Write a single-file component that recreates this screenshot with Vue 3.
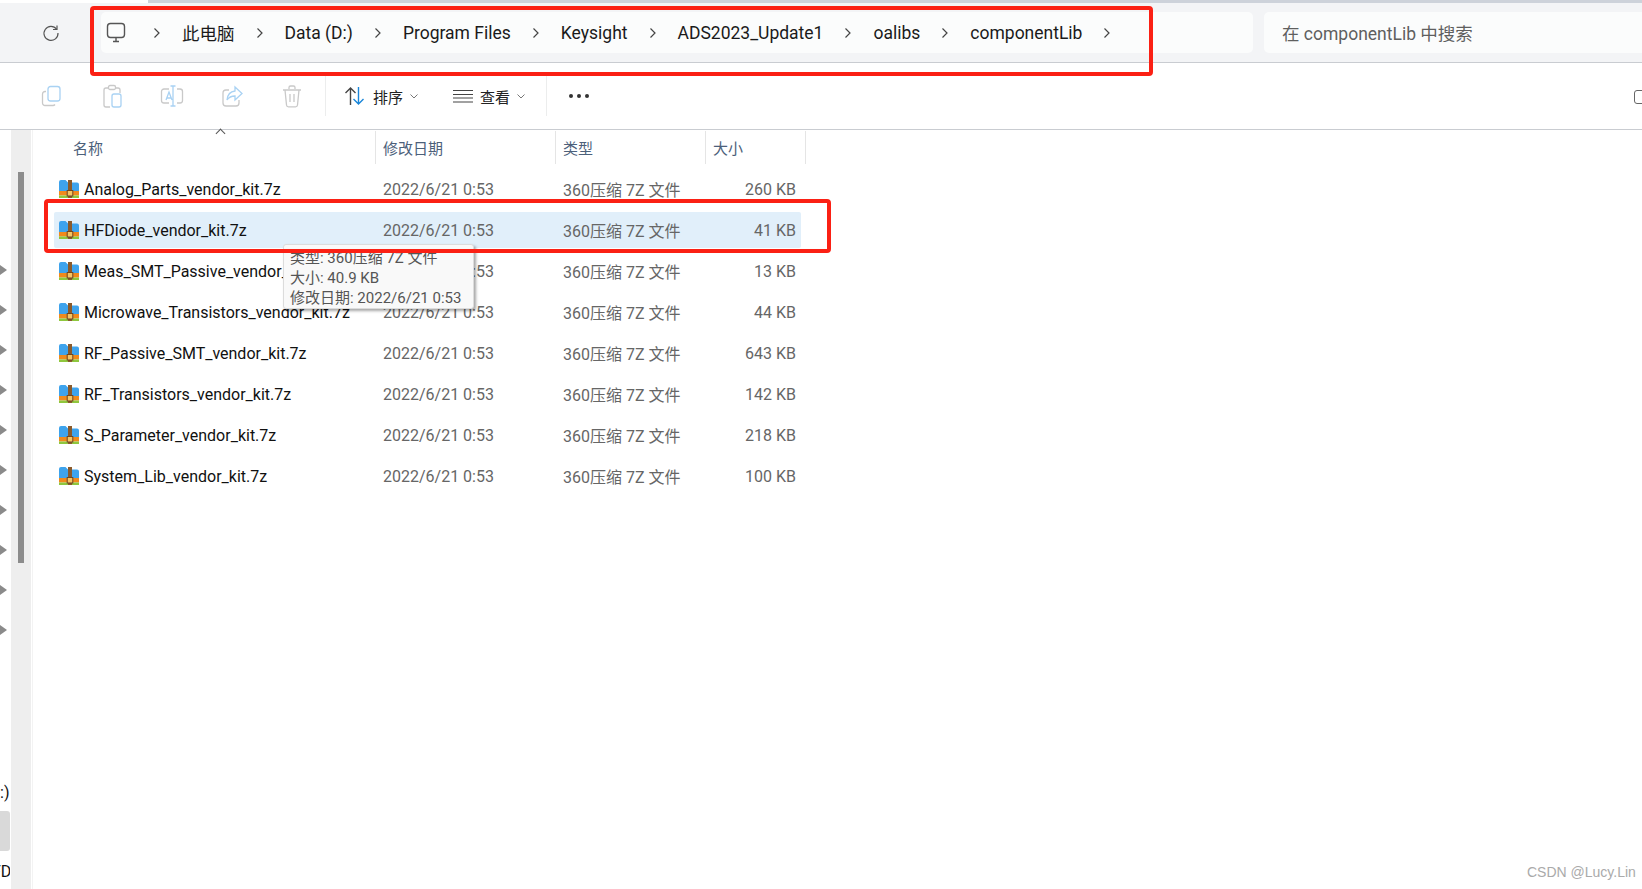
<template>
  <div class="page">
    <div class="top-strip"></div>

    <header class="address-row">
      <button class="refresh">
        <svg viewBox="0 0 20 20" width="20" height="20" fill="none" stroke="#555" stroke-width="1.2">
          <path d="M15.6 6.2A7 7 0 1 0 17 10" />
          <path d="M16 2.5v4h-4" />
        </svg>
      </button>
      <nav class="address-bar">
        <svg class="pc-icon" viewBox="0 0 22 22" width="22" height="22" fill="none" stroke="#555" stroke-width="1.4">
          <rect x="2.5" y="1.5" width="17" height="14" rx="3" />
          <path d="M8 19.5h6M11 16v3" />
        </svg>
        <template v-for="crumb in crumbs" :key="crumb">
          <svg class="chevron" viewBox="0 0 8 12" width="8" height="12" fill="none" stroke="#444" stroke-width="1.2"><path d="M1.5 1.5 6 6l-4.5 4.5" /></svg>
          <span class="crumb">{{ crumb }}</span>
        </template>
        <svg class="chevron" viewBox="0 0 8 12" width="8" height="12" fill="none" stroke="#444" stroke-width="1.2"><path d="M1.5 1.5 6 6l-4.5 4.5" /></svg>
      </nav>
      <div class="search">在 componentLib 中搜索</div>
    </header>

    <div class="toolbar">
      <div class="tool-group">
        <svg viewBox="0 0 24 24" width="24" height="24" fill="none" stroke-width="1.3">
          <path d="M6 7.5H5a2.5 2.5 0 0 0-2.5 2.5v9A2.5 2.5 0 0 0 5 21.500h8a2.500 2.500 0 0 0 2-1" stroke="#c9c9c9" />
          <rect x="8" y="2.500" width="12" height="14.500" rx="2.500" stroke="#a9d2f3" />
        </svg>
        <svg viewBox="0 0 24 24" width="24" height="24" fill="none" stroke-width="1.3">
          <path d="M9 4H6a2 2 0 0 0-2 2v15a2 2 0 0 0 2 2h4M15 4h3a2 2 0 0 1 2 2v3" stroke="#c9c9c9" />
          <rect x="8.500" y="1.500" width="7" height="4" rx="1.500" stroke="#c9c9c9" />
          <rect x="12" y="10" width="9" height="13" rx="2" stroke="#a9d2f3" />
        </svg>
        <svg viewBox="0 0 24 24" width="24" height="24" fill="none" stroke-width="1.3">
          <path d="M9 5H4a2.500 2.500 0 0 0-2.500 2.500v9A2.500 2.500 0 0 0 4 19h5M17 5h3a2.500 2.500 0 0 1 2.500 2.500v9A2.500 2.500 0 0 1 20 19h-3" stroke="#c9c9c9" />
          <path d="M13 2v20M10.500 2h5M10.500 22h5M6 16l3-8 3 8M7 14h4" stroke="#a9d2f3" />
        </svg>
        <svg viewBox="0 0 24 24" width="24" height="24" fill="none" stroke-width="1.3">
          <path d="M9 6H6a3 3 0 0 0-3 3v10a3 3 0 0 0 3 3h10a3 3 0 0 0 3-3v-3" stroke="#c9c9c9" />
          <path d="M15 3l7 6.500-7 6.500v-4c-4 0-6 1-8 4 .5-5 3-8.500 8-9z" stroke="#a9d2f3" />
        </svg>
        <svg viewBox="0 0 24 24" width="24" height="24" fill="none" stroke="#c9c9c9" stroke-width="1.3">
          <path d="M3 6h18M9 5V3.500A1.500 1.500 0 0 1 10.500 2h3A1.500 1.500 0 0 1 15 3.500V5M5 6l1.500 15a2 2 0 0 0 2 1.800h7a2 2 0 0 0 2-1.800L19 6M10 10v8M14 10v8" />
        </svg>
      </div>

      <div class="tool-sep"></div>

      <div class="tool-btn sort-btn">
        <svg viewBox="0 0 22 20" width="22" height="20" fill="none" stroke-width="1.4">
          <path d="M6.500 19V2M1.500 7l5-5 5 5" stroke="#444" />
          <path d="M14.500 1v17M9.500 13l5 5 5-5" stroke="#1a86d9" />
        </svg>
        <span>排序</span>
        <svg class="caret" viewBox="0 0 8 5" width="8" height="5" fill="none" stroke="#777"><path d="M.5.5 4 4 7.500.5" /></svg>
      </div>
      <div class="tool-btn view-btn">
        <svg viewBox="0 0 20 14" width="20" height="14" fill="none" stroke="#444" stroke-width="1.200">
          <path d="M0 1.500h20M0 5.500h20M0 9h20M0 13h20" />
        </svg>
        <span>查看</span>
        <svg class="caret" viewBox="0 0 8 5" width="8" height="5" fill="none" stroke="#777"><path d="M.5.5 4 4 7.500.5" /></svg>
      </div>

      <div class="tool-sep"></div>

      <div class="more"><i></i><i></i><i></i></div>
      <div class="details-btn"></div>
    </div>

    <main class="body">
      <aside class="nav">
        <div class="nav-labels">
          <span v-for="n in 10" :key="n" class="pin"></span>
        </div>
        <div class="nav-scroll"><div class="nav-thumb"></div></div>
        <span class="nav-drive">:)</span>
        <div class="nav-active"></div>
        <span class="nav-cut">FD</span>
      </aside>

      <section class="list">
        <div class="list-head">
          <div class="head-cell head-name">名称<span class="sort-mark"></span></div>
          <div class="head-cell">修改日期</div>
          <div class="head-cell">类型</div>
          <div class="head-cell">大小</div>
        </div>
        <div v-for="file in files" :key="file.name" class="file-row" :class="{ selected: file.selected }">
          <div class="file-name">
            <svg class="zip-icon" viewBox="0 0 20 18" width="20" height="18">
              <path d="M0 2a2 2 0 0 1 2-2h4.500l2.500 2.500h9a2 2 0 0 1 2 2V13H0z" fill="#3ea3ec" />
              <rect y="11" width="20" height="4.500" fill="#f08a1c" />
              <rect y="15.500" width="20" height="2.500" fill="#8fc73e" />
              <rect x="9" y="0" width="4" height="18" fill="#8a5a2b" />
              <rect x="8.200" y="10.500" width="5.600" height="5.500" fill="#f5c563" stroke="#6e4520" stroke-width="1" />
            </svg>
            {{ file.name }}
          </div>
          <div class="file-cell">2022/6/21 0:53</div>
          <div class="file-cell">360压缩 7Z 文件</div>
          <div class="file-cell file-size">{{ file.size }}</div>
        </div>
      </section>
    </main>

    <div class="tooltip">
      <div>类型: 360压缩 7Z 文件</div>
      <div>大小: 40.9 KB</div>
      <div>修改日期: 2022/6/21 0:53</div>
    </div>

    <div class="mark mark-address"></div>
    <div class="mark mark-row"></div>
    <div class="watermark">CSDN @Lucy.Lin</div>
  </div>
</template>

<script setup>
const crumbs = ['此电脑', 'Data (D:)', 'Program Files', 'Keysight', 'ADS2023_Update1', 'oalibs', 'componentLib']

const files = [
  { name: 'Analog_Parts_vendor_kit.7z', size: '260 KB' },
  { name: 'HFDiode_vendor_kit.7z', size: '41 KB', selected: true },
  { name: 'Meas_SMT_Passive_vendor_kit.7z', size: '13 KB' },
  { name: 'Microwave_Transistors_vendor_kit.7z', size: '44 KB' },
  { name: 'RF_Passive_SMT_vendor_kit.7z', size: '643 KB' },
  { name: 'RF_Transistors_vendor_kit.7z', size: '142 KB' },
  { name: 'S_Parameter_vendor_kit.7z', size: '218 KB' },
  { name: 'System_Lib_vendor_kit.7z', size: '100 KB' }
]
</script>

<style>
html,
body {
  margin: 0;
  background: #fff;
  overflow: hidden;
}
</style>

<style scoped>
.page {
  position: relative;
  width: 1642px;
  height: 889px;
  overflow: hidden;
  background: #fff;
  font-family: Roboto, "Noto Sans CJK SC", sans-serif;
  color: #1a1a1a;
}

.top-strip {
  height: 3px;
  margin-left: 148px;
  background: #cdd2da;
}

.address-row {
  display: flex;
  align-items: flex-start;
  height: 59px;
  padding-top: 9px;
  box-sizing: border-box;
  background: #f3f4f6;
  border-bottom: 1px solid #c9ccd1;
  height: 60px;
}

.refresh {
  width: 101px;
  height: 41px;
  padding: 0 0 0 0;
  border: 0;
  background: none;
  display: flex;
  align-items: center;
  justify-content: center;
  flex: none;
}

.address-bar {
  width: 1152px;
  height: 41px;
  flex: none;
  display: flex;
  align-items: center;
  box-sizing: border-box;
  background: #fbfcfc;
  border-radius: 5px;
  padding-left: 4px;
  font-size: 17.5px;
}

.pc-icon {
  margin-right: 26px;
}

.chevron {
  flex: none;
}

.crumb {
  margin: 0 21px;
  white-space: nowrap;
}

.search {
  flex: 1;
  margin-left: 11px;
  height: 41px;
  display: flex;
  align-items: center;
  padding-left: 18px;
  background: #fbfcfc;
  border-radius: 5px 0 0 5px;
  font-size: 17.5px;
  color: #5f5f5f;
}

.toolbar {
  display: flex;
  align-items: center;
  height: 67px;
  box-sizing: border-box;
  border-bottom: 1px solid #c9ccd1;
  position: relative;
}

.tool-group {
  display: flex;
  align-items: center;
  gap: 36px;
  padding-left: 40px;
  width: 325px;
  box-sizing: border-box;
}

.tool-sep {
  width: 1px;
  height: 40px;
  background: #eceded;
  flex: none;
}

.tool-btn {
  display: flex;
  align-items: center;
  font-size: 15px;
  color: #222;
}

.tool-btn span {
  margin-left: 7px;
}

.caret {
  margin-left: 7px;
}

.sort-btn {
  margin-left: 18px;
}

.view-btn {
  margin-left: 35px;
}

.view-btn + .tool-sep {
  margin-left: 21px;
}

.more {
  display: flex;
  gap: 4px;
  margin-left: 22px;
}

.more i {
  width: 4px;
  height: 4px;
  border-radius: 50%;
  background: #333;
}

.details-btn {
  position: absolute;
  left: 1634px;
  top: 27px;
  width: 16px;
  height: 14px;
  box-sizing: border-box;
  border: 1.5px solid #666;
  border-radius: 3px;
}

.body {
  display: flex;
  height: 759px;
}

.nav {
  position: relative;
  width: 33px;
  flex: none;
}

.nav-labels {
  display: flex;
  flex-direction: column;
  gap: 30px;
  padding-top: 135px;
}

.pin {
  width: 7px;
  height: 10px;
  background: #8a8a8a;
  clip-path: polygon(0 0, 100% 50%, 0 100%);
}

.nav-scroll {
  position: absolute;
  left: 11px;
  top: 0;
  width: 20px;
  height: 100%;
  background: #eeeeee;
}

.nav-thumb {
  width: 6px;
  height: 391px;
  margin: 42px 0 0 7px;
  background: #8c8c8c;
}

.nav-drive {
  position: absolute;
  left: 0;
  top: 653px;
  font-size: 16px;
  color: #111;
}

.nav-active {
  position: absolute;
  left: 0;
  top: 681px;
  width: 10px;
  height: 40px;
  background: #d9d9d9;
  border-radius: 0 3px 3px 0;
}

.nav-cut {
  position: absolute;
  left: -8px;
  top: 732px;
  width: 18px;
  overflow: hidden;
  font-size: 16px;
  color: #111;
}

.list {
  flex: 1;
  padding-left: 21px;
  border-left: 1px solid #f3f3f3;
  margin-left: -1px;
}

.list-head {
  display: grid;
  grid-template-columns: 322px 180px 150px 100px;
  height: 33px;
  margin-top: 1px;
  margin-bottom: 7px;
  color: #4c607a;
  font-size: 15px;
}

.head-cell {
  position: relative;
  display: flex;
  align-items: center;
  padding-left: 7px;
  border-right: 1px solid #e5e5e5;
}

.head-name {
  padding-left: 19px;
}

.sort-mark {
  position: absolute;
  left: 163px;
  top: -1px;
  width: 6px;
  height: 6px;
  border-left: 1px solid #555;
  border-top: 1px solid #555;
  transform: rotate(45deg);
}

.file-row {
  display: grid;
  grid-template-columns: 329px 180px 150px 83px;
  align-items: center;
  width: 747px;
  height: 36px;
  margin-bottom: 5px;
  padding-right: 5px;
  box-sizing: border-box;
  border-radius: 2px;
  font-size: 16px;
  color: #666;
}

.file-row.selected {
  background: #e1effa;
}

.file-name {
  display: flex;
  align-items: center;
  gap: 5px;
  padding-left: 5px;
  color: #111;
  white-space: nowrap;
}

.zip-icon {
  flex: none;
}

.file-size {
  text-align: right;
}

.tooltip {
  position: absolute;
  left: 283px;
  top: 244px;
  width: 191px;
  height: 65px;
  box-sizing: border-box;
  padding: 3px 6px;
  background: #f9f9f9;
  border: 1px solid #dcdcdc;
  border-radius: 3px;
  box-shadow: 2px 2px 3px rgba(0, 0, 0, 0.35);
  font-size: 15px;
  line-height: 20px;
  color: #555;
  white-space: nowrap;
}

.mark {
  position: absolute;
  box-sizing: border-box;
  border: 4px solid #fb2014;
  border-radius: 4px;
}

.mark-address {
  left: 90px;
  top: 6px;
  width: 1063px;
  height: 70px;
}

.mark-row {
  left: 44px;
  top: 199px;
  width: 787px;
  height: 54px;
}

.watermark {
  position: absolute;
  left: 1527px;
  top: 864px;
  font-family: "Liberation Sans", sans-serif;
  font-size: 14px;
  color: #aaaaaa;
}
</style>
